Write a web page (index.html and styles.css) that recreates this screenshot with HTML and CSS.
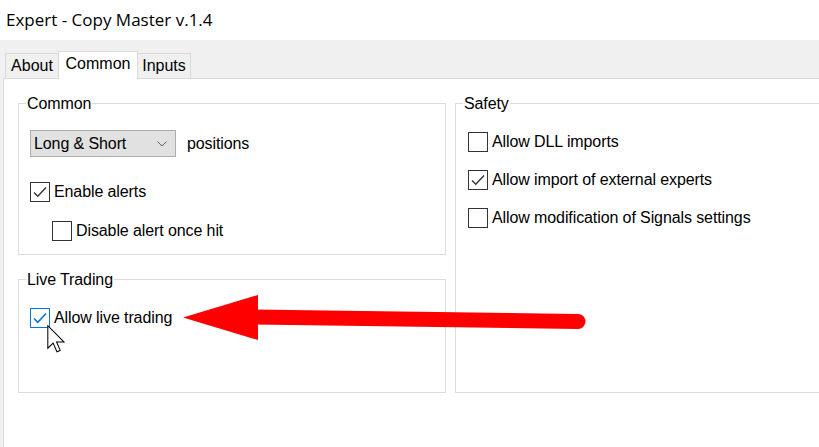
FILE: index.html
```html
<!DOCTYPE html>
<html>
<head>
<meta charset="utf-8">
<link rel="stylesheet" href="styles.css">
</head>
<body>
<div class="window">
  <div class="titlebar">Expert - Copy Master v.1.4</div>
  <div class="client">
    <div class="tabs">
      <div class="tab tab-about">About</div>
      <div class="tab tab-common active">Common</div>
      <div class="tab tab-inputs">Inputs</div>
    </div>
    <div class="panel">
      <div class="grid">
        <div class="group g-common">
          <span class="legend">Common</span>
          <div class="row row-select">
            <div class="select"><span>Long &amp; Short</span>
              <svg class="chev" width="10" height="6" viewBox="0 0 10 6"><path d="M0.5 0.5 L5 5 L9.5 0.5" fill="none" stroke="#606060" stroke-width="1"/></svg>
            </div>
            <span class="after">positions</span>
          </div>
          <div class="row row-cb first">
            <span class="cb"><svg width="18" height="18" viewBox="0 0 18 18"><path d="M3 9.5 L6.8 13.3 L15 4.5" fill="none" stroke="#333" stroke-width="1.4"/></svg></span>
            <span class="lbl">Enable alerts</span>
          </div>
          <div class="row row-cb indent">
            <span class="cb"></span>
            <span class="lbl">Disable alert once hit</span>
          </div>
        </div>
        <div class="group g-safety">
          <span class="legend">Safety</span>
          <div class="row row-cb">
            <span class="cb"></span>
            <span class="lbl">Allow DLL imports</span>
          </div>
          <div class="row row-cb">
            <span class="cb"><svg width="18" height="18" viewBox="0 0 18 18"><path d="M3 9.5 L6.8 13.3 L15 4.5" fill="none" stroke="#333" stroke-width="1.4"/></svg></span>
            <span class="lbl">Allow import of external experts</span>
          </div>
          <div class="row row-cb">
            <span class="cb"></span>
            <span class="lbl">Allow modification of Signals settings</span>
          </div>
        </div>
        <div class="group g-live">
          <span class="legend">Live Trading</span>
          <div class="row row-cb">
            <span class="cb cb-focus"><svg width="18" height="18" viewBox="0 0 18 18"><path d="M3 9.5 L6.8 13.3 L15 4.5" fill="none" stroke="#0078d7" stroke-width="1.6"/></svg></span>
            <span class="lbl">Allow live trading</span>
          </div>
        </div>
      </div>
    </div>
  </div>
  <svg class="red-arrow" width="819" height="447" viewBox="0 0 819 447">
    <line x1="252" y1="317" x2="578" y2="321.5" stroke="#ff0000" stroke-width="15" stroke-linecap="round"/>
    <polygon points="183,317.5 258,295 258,340" fill="#ff0000"/>
  </svg>
  <svg class="cursor" width="18" height="28" viewBox="0 0 13 20.5">
    <path d="M0.5 0.5 L0.5 17 L4.4 13.2 L7.2 19.6 L9.6 18.6 L6.9 12.4 L12.3 12.4 Z" fill="#fff" stroke="#000" stroke-width="0.75" stroke-linejoin="miter"/>
  </svg>
</div>
</body>
</html>
```

FILE: styles.css
```css
html, body {
  margin: 0;
  padding: 0;
  background: #ffffff;
}
.window {
  position: relative;
  width: 819px;
  height: 447px;
  overflow: hidden;
  font-family: "Liberation Sans", Arial, sans-serif;
  font-size: 16px;
  letter-spacing: -0.1px;
  color: #000;
}
.titlebar {
  height: 40px;
  line-height: 40px;
  padding-left: 6px;
  font-family: "Open Sans", "Noto Sans", sans-serif;
  font-size: 17px;
  letter-spacing: 0;
  color: #000;
  background: #fff;
}
.client {
  height: 407px;
  background: #f0f0f0;
  display: flex;
  flex-direction: column;
}
.tabs {
  display: flex;
  align-items: flex-start;
  margin-top: 11px;
  padding-left: 5px;
  height: 27px;
}
.tab {
  box-sizing: border-box;
  height: 25px;
  margin-top: 2px;
  border: 1px solid #d9d9d9;
  border-bottom: none;
  background: #f0f0f0;
  line-height: 24px;
  text-align: center;
  letter-spacing: 0;
}
.tab-about { width: 54px; }
.tab-common { width: 80px; margin-left: -1px; }
.tab-inputs { width: 54px; margin-left: -1px; }
.tab.active {
  position: relative;
  z-index: 2;
  height: 28px;
  margin-top: 0;
  background: #fff;
  border-color: #d9d9d9;
}
.panel {
  flex: 1;
  margin-left: 3px;
  background: #fff;
  border-left: 1px solid #d9d9d9;
  border-top: 1px solid #d9d9d9;
}
.grid {
  display: grid;
  grid-template-columns: 428px 372px;
  grid-template-rows: 152px 114px;
  column-gap: 9px;
  row-gap: 24px;
  padding: 24px 0 0 14px;
}
.group {
  position: relative;
  box-sizing: border-box;
  border: 1px solid #dcdcdc;
}
.legend {
  position: absolute;
  top: -9px;
  left: 7px;
  padding: 0 1px;
  background: #fff;
  line-height: 18px;
}
.g-common {
  grid-column: 1;
  grid-row: 1;
  padding: 26px 0 0 11px;
}
.g-safety {
  grid-column: 2;
  grid-row: 1 / 3;
  padding: 28px 0 0 12px;
  display: flex;
  flex-direction: column;
  gap: 18px;
}
.g-live {
  grid-column: 1;
  grid-row: 2;
  padding: 28px 0 0 11px;
}
.row {
  display: flex;
  align-items: center;
}
.row-select {
  height: 27px;
}
.select {
  box-sizing: border-box;
  width: 146px;
  height: 27px;
  background: #e1e1e1;
  border: 1px solid #adadad;
  display: flex;
  align-items: center;
  justify-content: space-between;
  padding: 0 8px 0 3px;
}
.chev {
  display: block;
}
.after {
  margin-left: 11px;
}
.row-cb {
  height: 20px;
}
.row-cb.first {
  margin-top: 25px;
}
.row-cb.indent {
  margin-top: 19px;
  margin-left: 22px;
}
.cb {
  box-sizing: border-box;
  width: 20px;
  height: 20px;
  border: 1px solid #333;
  background: #fff;
  display: flex;
  align-items: center;
  justify-content: center;
  flex: none;
}
.cb svg {
  display: block;
}
.cb-focus {
  border-color: #0078d7;
}
.lbl {
  margin-left: 4px;
  white-space: nowrap;
}
.red-arrow {
  position: absolute;
  left: 0;
  top: 0;
  pointer-events: none;
}
.cursor {
  position: absolute;
  left: 46.5px;
  top: 324.5px;
}
```
